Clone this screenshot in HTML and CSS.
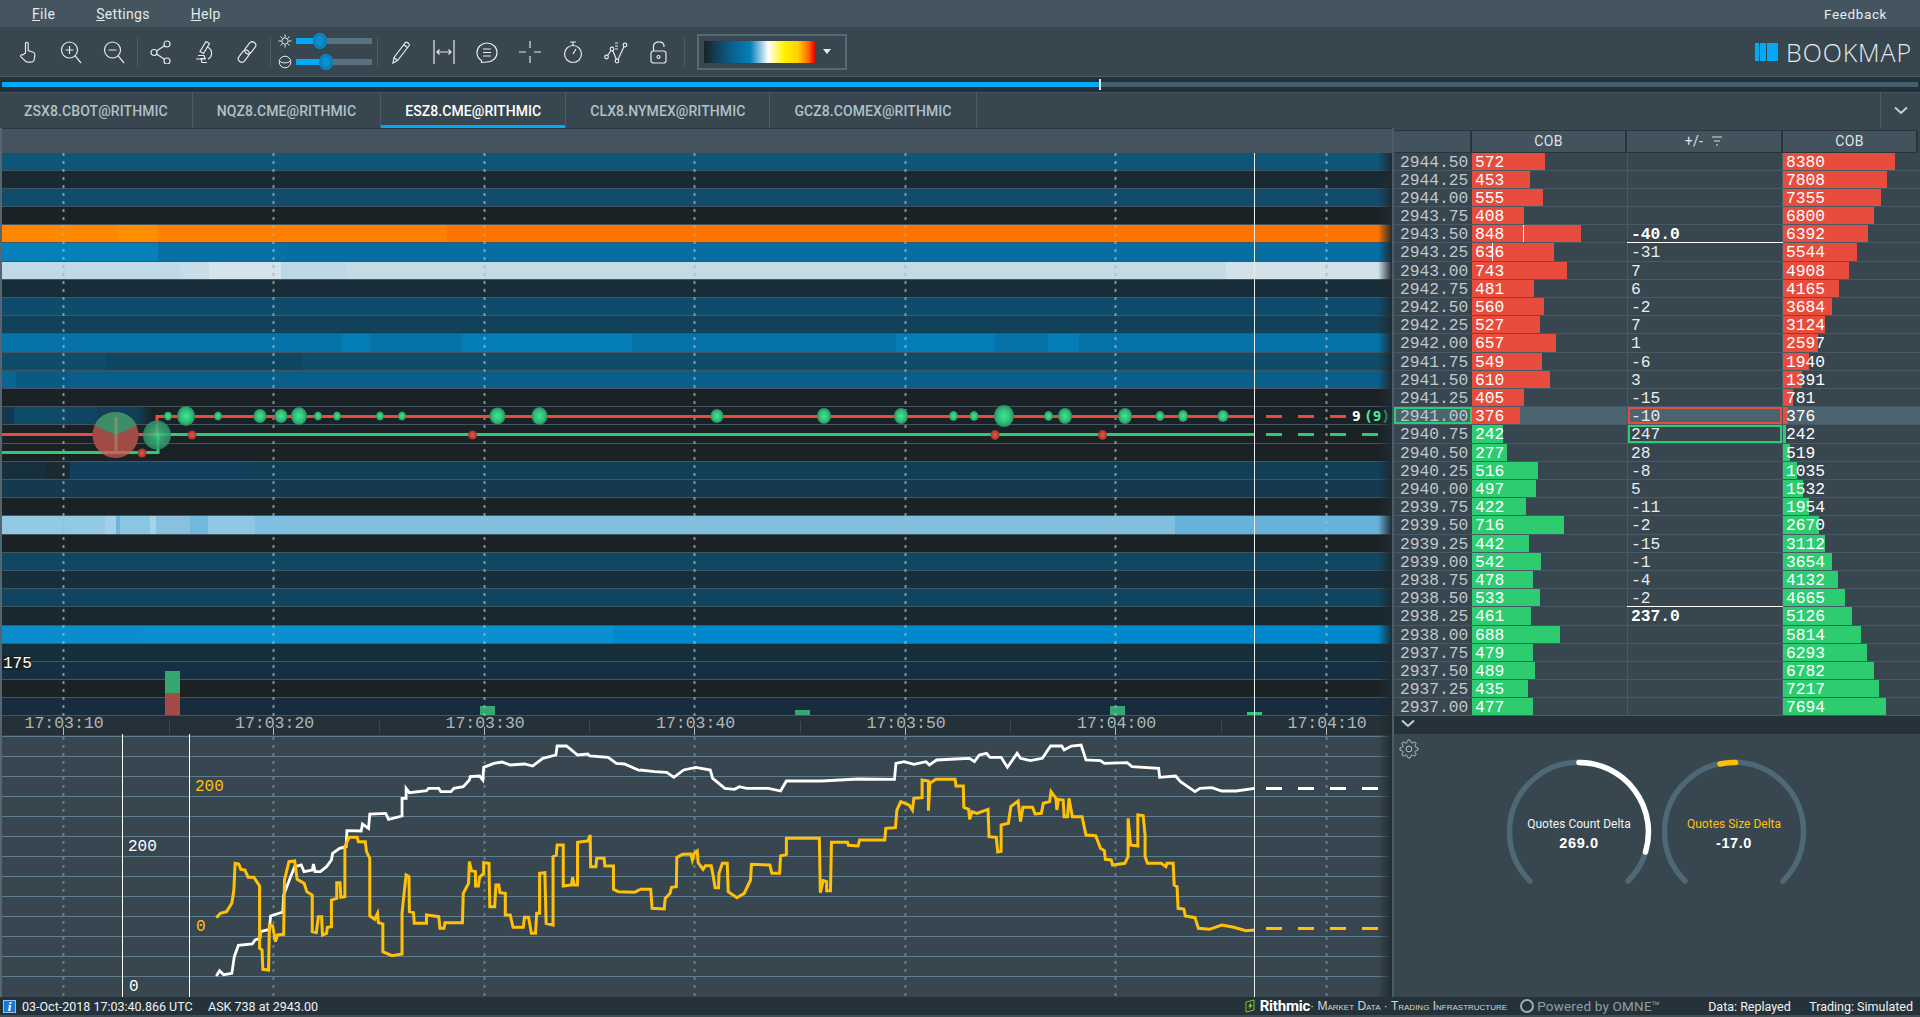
FILE: index.html
```html
<!DOCTYPE html>
<html lang="en">
<head>
<meta charset="utf-8">
<title>Bookmap</title>
<link rel="stylesheet" href="styles.css">
</head>
<body>
<div class="app">
  <header class="menu">
    <nav class="menu-items">
      <span class="menu-item"><u>F</u>ile</span>
      <span class="menu-item"><u>S</u>ettings</span>
      <span class="menu-item"><u>H</u>elp</span>
    </nav>
    <span class="feedback">Feedback</span>
  </header>

  <section class="toolbar">
    <span class="tool"><svg class="icon" viewBox="0 0 24 24"><path d="M9.5 13V3.6c0-1.7 2.7-1.7 2.7 0V10.5l5 1.7c1.2.4 1.8 1.2 1.7 2.4l-.5 4.2c-.3 2.2-1.8 3.4-3.8 3.4h-2.4c-1.6 0-2.7-.6-3.6-1.9L4.7 16.6c-.8-1.3.9-2.7 2.1-1.6z"/></svg></span>
    <span class="tool"><svg class="icon" viewBox="0 0 24 24"><circle cx="10.5" cy="10" r="8"/><path d="M16.2 15.8 22 23M10.5 6v8M6.5 10h8"/></svg></span>
    <span class="tool"><svg class="icon" viewBox="0 0 24 24"><circle cx="10.5" cy="10" r="8"/><path d="M16.2 15.8 22 23M6.5 10h8"/></svg></span>
    <i class="sep"></i>
    <span class="tool"><svg class="icon" viewBox="0 0 24 24"><circle cx="18" cy="4" r="3"/><circle cx="5" cy="12.5" r="3"/><circle cx="18" cy="21" r="3"/><path d="M15.5 5.7 7.5 11M7.5 14l8 5.3"/></svg></span>
    <span class="tool"><svg class="icon" viewBox="0 0 24 24"><path d="M14 1.5l3.5 2-6 10-3.500-2zM15.500 7c3 1.500 4.500 4 4 7.500-.4 2.500-2 4-3.500 4.500M6 15.500h6l1 3H9l1 4h5M4 19h10"/></svg></span>
    <span class="tool"><svg class="icon" viewBox="0 0 24 24"><g transform="rotate(38 12 12)"><rect x="8.500" y="0" width="7" height="13.500" rx="3.500"/><rect x="8.500" y="10.500" width="7" height="13.500" rx="3.500"/></g></svg></span>
    <i class="sep"></i>
    <div class="sliders">
      <div class="slider-row">
        <svg class="mini" viewBox="0 0 14 14"><circle cx="7" cy="7" r="3.200"/><path d="M7 .5v2.500M7 11v2.500M.5 7H3M11 7h2.500M2.500 2.500l1.800 1.800M9.700 9.700l1.800 1.800M2.500 11.500l1.800-1.800M9.700 4.300l1.800-1.800"/></svg>
        <span class="track"><span class="fill fill-a"></span><i class="knob"></i></span>
      </div>
      <div class="slider-row">
        <svg class="mini" viewBox="0 0 14 14"><circle cx="7" cy="7" r="5.800"/><path d="M1.500 6c3 2.500 8 2.500 11 0"/></svg>
        <span class="track"><span class="fill fill-b"></span><i class="knob"></i></span>
      </div>
    </div>
    <i class="sep"></i>
    <span class="tool"><svg class="icon" viewBox="0 0 24 24"><path d="M5 17.500 16.500 2.500c1-1 4.500 1.500 3.700 3L8.500 20.500l-4.500 2.500zM5 17.500l3.500 3M14.800 4.800l3.700 2.800"/></svg></span>
    <span class="tool"><svg class="icon" viewBox="0 0 24 24"><path d="M2 0v24M22 0v24M5 12h14M7.500 9.500 5 12l2.500 2.500M16.500 9.500 19 12l-2.500 2.500"/></svg></span>
    <span class="tool"><svg class="icon" viewBox="0 0 24 24"><path d="M6.500 20.500C3 18.500 2 15.500 2 12.500 2 7 6.500 3 12 3s10 4 10 9.500S17.500 22 12 22c-2 0-2.500 0-5.500.5zM8 9h8M8 12.500h8M8 16h8"/></svg></span>
    <span class="tool"><svg class="icon" viewBox="0 0 24 24"><path d="M12 1v7M12 16v7M1 12h7M16 12h7"/></svg></span>
    <span class="tool"><svg class="icon" viewBox="0 0 24 24"><circle cx="12" cy="14" r="8.500"/><path d="M9 2h6M12 2v3.500M12 14l3-5"/></svg></span>
    <span class="tool"><svg class="icon" viewBox="0 0 24 24"><circle cx="2.500" cy="17" r="1.800"/><circle cx="8" cy="9" r="1.800"/><circle cx="13" cy="21" r="1.800"/><circle cx="21" cy="5" r="1.800"/><path d="M3.500 15.500 7 10.500M8.800 10.700 12.300 19.300M14 19.500 20 6.500M11 3h3M11 6h3M11 9h3"/></svg></span>
    <span class="tool"><svg class="icon" viewBox="0 0 24 24"><path d="M6.500 11V6c0-5.500 10.500-5.500 10.500 0v1"/><rect x="4" y="11" width="15" height="12" rx="2.500"/><circle cx="11.500" cy="17" r="1.500"/></svg></span>
    <i class="sep sep-wide"></i>
    <div class="palette"><span class="palette-bar"></span><i class="caret"></i></div>
    <div class="logo"><i class="logo-b1"></i><i class="logo-b2"></i><i class="logo-b3"></i><span class="logo-text">BOOKMAP</span></div>
  </section>

  <section class="timeline"><div class="timeline-done"></div><i class="timeline-mark"></i><div class="timeline-rest"></div></section>

  <section class="tabs">
    <span class="tab">ZSX8.CBOT@RITHMIC</span>
    <span class="tab">NQZ8.CME@RITHMIC</span>
    <span class="tab active">ESZ8.CME@RITHMIC</span>
    <span class="tab">CLX8.NYMEX@RITHMIC</span>
    <span class="tab">GCZ8.COMEX@RITHMIC</span>
    <span class="tabs-space"></span>
    <span class="tabs-more"><svg class="chev" viewBox="0 0 14 9"><path d="M1 1.500 7 7l6-5.500"/></svg></span>
  </section>

  <main class="main">
    <section class="left">
      <div class="left-head"></div>
      <div class="heat">
        <div class="hr r0"></div><div class="hr r1"></div><div class="hr r2"></div><div class="hr r3"></div><div class="hr r4"></div><div class="hr r5"></div><div class="hr r6"></div><div class="hr r7"></div><div class="hr r8"></div><div class="hr r9"></div>
        <div class="hr r10"></div><div class="hr r11"></div><div class="hr r12"></div><div class="hr r13"></div><div class="hr r14"></div><div class="hr r15"></div><div class="hr r16"></div><div class="hr r17"></div><div class="hr r18"></div><div class="hr r19"></div>
        <div class="hr r20"></div><div class="hr r21"></div><div class="hr r22"></div><div class="hr r23"></div><div class="hr r24"></div><div class="hr r25"></div><div class="hr r26"></div><div class="hr r27"></div><div class="hr r28"></div><div class="hr r29"></div><div class="hr r30"></div>
      </div>
      <div class="axis">
        <span>17:03:10</span><span>17:03:20</span><span>17:03:30</span><span>17:03:40</span><span>17:03:50</span><span>17:04:00</span><span>17:04:10</span>
      </div>
      <div class="study"></div>

      <svg class="overlay" viewBox="0 128 1392 869" width="1392" height="869">
        <defs>
          <radialGradient id="gb"><stop offset="0" stop-color="#3fe794"/><stop offset=".65" stop-color="#2fbd78"/><stop offset="1" stop-color="#2a8a60"/></radialGradient>
          <radialGradient id="gt"><stop offset="0" stop-color="#3fd28c" stop-opacity=".8"/><stop offset="1" stop-color="#2f8f68" stop-opacity=".85"/></radialGradient>
          <radialGradient id="rb"><stop offset="0" stop-color="#f05544"/><stop offset="1" stop-color="#9c352c"/></radialGradient>
          <linearGradient id="fade"><stop offset="0" stop-color="#1f2a31" stop-opacity="0"/><stop offset="1" stop-color="#1f2a31"/></linearGradient>
        </defs>

        <g class="vol-g"><rect x="165" y="671" width="15" height="22"/><rect x="480" y="706" width="15" height="9"/><rect x="795" y="710" width="15" height="5"/><rect x="1110" y="706" width="15" height="9"/><rect class="vol-b" x="1247" y="712" width="15" height="3"/></g>
        <rect class="vol-r" x="165" y="693" width="15" height="22"/>

        <g class="grid-heat"><path d="M63.500 153V716M273.500 153V716M484.500 153V716M694.500 153V716M905.500 153V716M1115.500 153V716M1326.500 153V716"/></g>
        <g class="grid-study"><path d="M63.500 737V997M273.500 737V997M484.500 737V997M694.500 737V997M905.500 737V997M1115.500 737V997M1326.500 737V997"/></g>
        <path class="tick-minor" d="M169.500 721V733M379.500 721V733M589.500 721V733M800.500 721V733M1010.500 721V733M1221.500 721V733"/>
        <path class="tick-major" d="M63.500 727V735M273.500 727V735M484.500 727V735M694.500 727V735M905.500 727V735M1115.500 727V735M1326.500 727V735"/>

        <path class="t-red" d="M2 434.500H157V416.500H1255"/>
        <path class="t-green" d="M2 452.500H158V434.500H1255"/>
        <path class="t-red dash" d="M1266 416.500H1347"/>
        <path class="t-green dash" d="M1266 434.500H1378"/>

        <circle cx="115.500" cy="435" r="23" fill="#a04b46"/>
        <path d="M115.500 435 94.500 425.500A23 23 0 0 1 136.500 425.500Z" fill="#3f8c68"/>
        <path class="bubble-cross" d="M116 417V452M100 452.500H131"/>
        <ellipse cx="157" cy="435" rx="14" ry="14.500" fill="url(#gt)"/>
        <g fill="url(#gb)">
          <ellipse cx="168" cy="416" rx="4" ry="4.500"/><ellipse cx="186" cy="416" rx="9" ry="10"/><ellipse cx="218" cy="416" rx="4" ry="4.500"/><ellipse cx="260" cy="416" rx="6.500" ry="7"/><ellipse cx="281" cy="416" rx="6.500" ry="7"/><ellipse cx="299" cy="416" rx="8" ry="9"/><ellipse cx="318" cy="416" rx="4" ry="4.500"/><ellipse cx="337" cy="416" rx="4" ry="4.500"/><ellipse cx="380" cy="416" rx="4" ry="4.500"/><ellipse cx="402" cy="416" rx="4" ry="4.500"/><ellipse cx="497.500" cy="416" rx="8" ry="8.500"/>
          <ellipse cx="539.500" cy="416" rx="8" ry="9"/><ellipse cx="717" cy="416" rx="6.500" ry="7"/><ellipse cx="824" cy="416" rx="7" ry="8"/><ellipse cx="901" cy="416" rx="7" ry="8"/><ellipse cx="953.500" cy="416" rx="4.500" ry="5"/><ellipse cx="974" cy="416" rx="4.500" ry="5"/><ellipse cx="1004" cy="416" rx="10" ry="11"/><ellipse cx="1048.500" cy="416" rx="4.500" ry="5"/><ellipse cx="1065" cy="416" rx="7" ry="8"/><ellipse cx="1125" cy="416" rx="7" ry="8"/><ellipse cx="1160" cy="416" rx="4.500" ry="5"/><ellipse cx="1183" cy="416" rx="5" ry="6"/><ellipse cx="1223" cy="416" rx="5.500" ry="6"/>
        </g>
        <g fill="url(#rb)">
          <ellipse cx="142" cy="453" rx="4.500" ry="4.500"/><ellipse cx="192" cy="435" rx="4.500" ry="4.500"/><ellipse cx="472.500" cy="435" rx="4.500" ry="4.500"/><ellipse cx="995" cy="435" rx="4.500" ry="5"/><ellipse cx="1102.500" cy="435" rx="4.500" ry="5"/>
        </g>

        <text class="qty" x="1352" y="421">9</text>
        <text class="qty qty-g" x="1364" y="421">(9)</text>

        <rect class="lbl-bg" x="2" y="656" width="29" height="14"/>
        <text class="mono lbl-w" x="3" y="668">175</text>

        <path class="study-v" d="M122.500 734V997M189.500 734V997"/>
        <text class="mono lbl-w" x="128" y="851">200</text>
        <text class="mono lbl-w" x="129" y="991">0</text>
        <text class="mono lbl-y" x="195" y="791">200</text>
        <text class="mono lbl-y" x="196" y="931">0</text>

        <g class="curve curve-w">
          <polyline transform="translate(0 640) scale(.40816 .33333)" points="530,1008 538,992 548,1004 568,1000 574,950 584,916 618,912 625,900 637,895 638,875 660,868 663,828 693,816 695,765 712,710 722,680 738,675 745,695 765,690 768,672 772,695 785,695 800,680 812,660 815,640 832,625 848,620 850,572 885,573 888,552 903,565 906,522 945,520 952,538 985,528 985,475 995,475 995,445 1003,458 1045,452 1050,445 1075,445 1080,455 1105,455 1112,445 1135,440 1150,420 1152,410 1175,408 1183,420 1185,382 1210,370 1230,366 1250,375 1285,372 1305,378 1330,355 1362,345 1365,318 1388,318 1415,345 1440,342 1445,348 1490,352 1510,370 1530,372 1568,392"/>
          <polyline transform="translate(640 720) scale(.48473 .33333)" points="0,150 30,155 55,157 70,172 90,150 115,142 145,150 150,175 175,205 195,208 205,200 220,205 265,205 290,213 302,183 375,183 450,177 525,178 528,130 545,125 565,133 590,125 597,135 612,120 650,117 680,115 690,125 700,105 715,100 722,112 745,112 758,142 778,100 785,115 805,122 830,115 847,78 870,78 875,90 890,78 910,75 920,120 950,122 958,130 1005,128 1015,140 1070,145 1072,172 1105,168 1115,185 1145,215 1155,205 1180,203 1200,213 1230,213 1268,205"/>
        </g>
        <g class="curve curve-y">
          <polyline transform="translate(0 640) scale(.40816 .33333)" points="530,833 540,820 555,815 568,790 573,750 576,670 585,672 590,688 600,690 608,712 622,712 636,738 636,925 642,930 644,988 658,990 660,855 668,858 675,905 680,885 695,883 697,720 708,665 722,663 728,718 745,730 752,755 765,765 765,875 775,878 780,830 788,830 790,885 800,880 802,862 812,860 812,780 825,775 825,728 833,728 835,772 845,770 845,620 855,592 875,592 878,605 895,605 898,635 906,655 906,828 918,838 925,820 927,848 938,852 938,935 960,947 985,942 985,820 990,760 995,705 1002,710 1003,815 1013,818 1015,850 1045,850 1045,825 1075,830 1078,865 1088,865 1090,848 1133,848 1135,760 1148,730 1150,665 1155,692 1165,695 1165,738 1172,738 1175,712 1185,700 1185,668 1198,670 1200,800 1212,800 1215,735 1222,735 1225,758 1238,760 1238,825 1250,825 1257,862 1282,862 1285,832 1295,832 1302,880 1312,880 1315,820 1322,820 1322,700 1335,698 1338,850 1355,855 1355,650 1363,645 1365,615 1380,615 1380,738 1400,735 1403,712 1407,735 1415,735 1415,607 1440,603 1446,585 1447,680 1460,680 1462,655 1480,655 1482,678 1503,678 1503,748 1515,755 1555,757 1568,748"/>
          <polyline transform="translate(640 720) scale(.48473 .33333)" points="0,508 22,508 25,565 50,567 52,535 62,520 65,502 75,500 76,412 88,403 105,402 108,420 112,400 118,393 120,428 130,448 135,437 147,437 150,460 155,503 162,503 163,460 170,430 180,430 182,515 200,533 215,520 228,480 230,433 268,435 272,460 288,460 290,408 302,403 302,355 370,355 372,518 378,482 385,485 385,512 393,512 395,367 428,367 430,376 450,378 453,360 505,360 507,325 527,323 530,270 538,245 555,255 562,270 565,235 582,233 582,180 595,183 595,272 598,190 610,178 650,178 652,198 667,198 668,262 678,268 680,298 685,275 695,280 718,268 720,350 735,352 738,396 745,394 745,315 760,310 765,260 780,243 785,305 790,262 810,262 815,282 828,280 832,250 845,245 848,215 858,235 860,270 863,238 873,240 875,290 882,290 885,235 892,290 912,290 920,345 940,347 950,385 958,392 960,418 972,420 975,435 1000,430 1007,410 1007,295 1012,375 1027,378 1027,285 1038,287 1042,345 1042,410 1047,430 1075,430 1085,440 1087,430 1100,430 1102,495 1108,500 1110,565 1122,567 1125,588 1145,593 1152,625 1175,628 1200,615 1225,622 1250,632 1268,630"/>
        </g>
        <path class="dash-w" d="M1266 788.500H1378"/>
        <path class="dash-y" d="M1266 928.500H1378"/>
        <path class="cross" d="M1254.500 153V997"/>
        <rect x="1378" y="153" width="14" height="844" fill="url(#fade)"/>
      </svg>
    </section>

    <section class="right">
      <div class="lhead"><span></span><span>COB</span><span class="lhead-mid">+/- <svg class="filter" viewBox="0 0 12 10"><path d="M1 1h10M3 5h6M5 9h2"/></svg></span><span>COB</span></div>
      <div class="ladder">
        <div class="lr"><span class="p">2944.50</span><span class="b ask" style="--w:73px">572</span><span class="d"></span><span class="b ask" style="--w:112px">8380</span></div>
        <div class="lr"><span class="p">2944.25</span><span class="b ask" style="--w:58px">453</span><span class="d"></span><span class="b ask" style="--w:104px">7808</span></div>
        <div class="lr"><span class="p">2944.00</span><span class="b ask" style="--w:71px">555</span><span class="d"></span><span class="b ask" style="--w:98px">7355</span></div>
        <div class="lr"><span class="p">2943.75</span><span class="b ask" style="--w:52px">408</span><span class="d"></span><span class="b ask" style="--w:91px">6800</span></div>
        <div class="lr"><span class="p">2943.50</span><span class="b ask" style="--w:109px">848<i class="mark mark-a"></i></span><span class="d total total-b">-40.0</span><span class="b ask" style="--w:85px">6392</span></div>
        <div class="lr"><span class="p">2943.25</span><span class="b ask" style="--w:82px">636<i class="mark mark-b"></i></span><span class="d">-31</span><span class="b ask" style="--w:74px">5544</span></div>
        <div class="lr"><span class="p">2943.00</span><span class="b ask" style="--w:95px">743</span><span class="d">7</span><span class="b ask" style="--w:66px">4908</span></div>
        <div class="lr"><span class="p">2942.75</span><span class="b ask" style="--w:62px">481</span><span class="d">6</span><span class="b ask" style="--w:56px">4165</span></div>
        <div class="lr"><span class="p">2942.50</span><span class="b ask" style="--w:72px">560</span><span class="d">-2</span><span class="b ask" style="--w:49px">3684</span></div>
        <div class="lr"><span class="p">2942.25</span><span class="b ask" style="--w:68px">527</span><span class="d">7</span><span class="b ask" style="--w:42px">3124</span></div>
        <div class="lr"><span class="p">2942.00</span><span class="b ask" style="--w:84px">657</span><span class="d">1</span><span class="b ask" style="--w:35px">2597</span></div>
        <div class="lr"><span class="p">2941.75</span><span class="b ask" style="--w:70px">549</span><span class="d">-6</span><span class="b ask" style="--w:26px">1940</span></div>
        <div class="lr"><span class="p">2941.50</span><span class="b ask" style="--w:78px">610</span><span class="d">3</span><span class="b ask" style="--w:19px">1391</span></div>
        <div class="lr"><span class="p">2941.25</span><span class="b ask" style="--w:52px">405</span><span class="d">-15</span><span class="b ask" style="--w:10px">781</span></div>
        <div class="lr hl"><span class="p box-g">2941.00</span><span class="b ask" style="--w:48px">376</span><span class="d box-r">-10</span><span class="b ask" style="--w:5px">376</span></div>
        <div class="lr"><span class="p">2940.75</span><span class="b bid" style="--w:31px">242</span><span class="d box-g">247</span><span class="b bid" style="--w:3px">242</span></div>
        <div class="lr"><span class="p">2940.50</span><span class="b bid" style="--w:35px">277</span><span class="d">28</span><span class="b bid" style="--w:7px">519</span></div>
        <div class="lr"><span class="p">2940.25</span><span class="b bid" style="--w:66px">516</span><span class="d">-8</span><span class="b bid" style="--w:14px">1035</span></div>
        <div class="lr"><span class="p">2940.00</span><span class="b bid" style="--w:64px">497</span><span class="d">5</span><span class="b bid" style="--w:20px">1532</span></div>
        <div class="lr"><span class="p">2939.75</span><span class="b bid" style="--w:54px">422</span><span class="d">-11</span><span class="b bid" style="--w:26px">1954</span></div>
        <div class="lr"><span class="p">2939.50</span><span class="b bid" style="--w:92px">716</span><span class="d">-2</span><span class="b bid" style="--w:36px">2670</span></div>
        <div class="lr"><span class="p">2939.25</span><span class="b bid" style="--w:57px">442</span><span class="d">-15</span><span class="b bid" style="--w:42px">3112</span></div>
        <div class="lr"><span class="p">2939.00</span><span class="b bid" style="--w:69px">542</span><span class="d">-1</span><span class="b bid" style="--w:49px">3654</span></div>
        <div class="lr"><span class="p">2938.75</span><span class="b bid" style="--w:61px">478</span><span class="d">-4</span><span class="b bid" style="--w:55px">4132</span></div>
        <div class="lr"><span class="p">2938.50</span><span class="b bid" style="--w:68px">533</span><span class="d">-2</span><span class="b bid" style="--w:62px">4665</span></div>
        <div class="lr"><span class="p">2938.25</span><span class="b bid" style="--w:59px">461</span><span class="d total total-t">237.0</span><span class="b bid" style="--w:69px">5126</span></div>
        <div class="lr"><span class="p">2938.00</span><span class="b bid" style="--w:88px">688</span><span class="d"></span><span class="b bid" style="--w:78px">5814</span></div>
        <div class="lr"><span class="p">2937.75</span><span class="b bid" style="--w:61px">479</span><span class="d"></span><span class="b bid" style="--w:84px">6293</span></div>
        <div class="lr"><span class="p">2937.50</span><span class="b bid" style="--w:63px">489</span><span class="d"></span><span class="b bid" style="--w:91px">6782</span></div>
        <div class="lr"><span class="p">2937.25</span><span class="b bid" style="--w:56px">435</span><span class="d"></span><span class="b bid" style="--w:96px">7217</span></div>
        <div class="lr"><span class="p">2937.00</span><span class="b bid" style="--w:61px">477</span><span class="d"></span><span class="b bid" style="--w:103px">7694</span></div>
      </div>
      <div class="collapse"><svg class="chev" viewBox="0 0 14 9"><path d="M1 1.500 7 7l6-5.500"/></svg></div>
      <div class="gauges">
        <svg class="gear" viewBox="0 0 24 24"><circle cx="12" cy="12" r="3.500"/><path d="M19.400 15a1.650 1.650 0 0 0 .33 1.820l.06.06a2 2 0 0 1 0 2.830 2 2 0 0 1-2.830 0l-.06-.06a1.650 1.650 0 0 0-1.820-.33 1.650 1.650 0 0 0-1 1.510V21a2 2 0 0 1-2 2 2 2 0 0 1-2-2v-.09A1.650 1.650 0 0 0 9 19.400a1.650 1.650 0 0 0-1.820.33l-.06.06a2 2 0 0 1-2.830 0 2 2 0 0 1 0-2.830l.06-.06a1.650 1.650 0 0 0 .33-1.820 1.650 1.650 0 0 0-1.510-1H3a2 2 0 0 1-2-2 2 2 0 0 1 2-2h.09A1.650 1.650 0 0 0 4.600 9a1.650 1.650 0 0 0-.33-1.820l-.06-.06a2 2 0 0 1 0-2.830 2 2 0 0 1 2.830 0l.06.06a1.650 1.650 0 0 0 1.820.33H9a1.650 1.650 0 0 0 1-1.510V3a2 2 0 0 1 2-2 2 2 0 0 1 2 2v.09a1.650 1.650 0 0 0 1 1.510 1.650 1.650 0 0 0 1.820-.33l.06-.06a2 2 0 0 1 2.830 0 2 2 0 0 1 0 2.830l-.06.06a1.650 1.650 0 0 0-.33 1.820V9a1.650 1.650 0 0 0 1.510 1H21a2 2 0 0 1 2 2 2 2 0 0 1-2 2h-.09a1.650 1.650 0 0 0-1.510 1z"/></svg>
        <div class="gauge">
          <svg class="arc" viewBox="-77 -77 154 132"><path class="arc-track" d="M-49 49A69.500 69.500 0 1 1 49 49"/><path class="arc-w" d="M0-69.500A69.500 69.500 0 0 1 66.500 20"/></svg>
          <div class="gauge-text"><span class="g-name">Quotes Count Delta</span><span class="g-val">269.0</span></div>
        </div>
        <div class="gauge">
          <svg class="arc" viewBox="-77 -77 154 132"><path class="arc-track" d="M-49 49A69.500 69.500 0 1 1 49 49"/><path class="arc-y" d="M-14-68A69.500 69.500 0 0 1 1.500-69.500"/></svg>
          <div class="gauge-text"><span class="g-name g-yellow">Quotes Size Delta</span><span class="g-val">-17.0</span></div>
        </div>
      </div>
    </section>
  </main>

  <footer class="status">
    <span class="info-ic">i</span>
    <span class="s-date">03-Oct-2018 17:03:40.866 UTC</span>
    <span class="s-ask">ASK 738 at 2943.00</span>
    <span class="status-space"></span>
    <svg class="r-logo" viewBox="0 0 12 14"><path d="M1 3l8-2v10l-8 2z"/><path class="r-in" d="M6 3.500 3 7.500h2l-1 3 4-4.500H6z"/></svg>
    <span class="rithmic">Rithmic</span>
    <span class="rithmic-sub">· Market Data · Trading Infrastructure</span>
    <i class="omne-ring"></i>
    <span class="omne">Powered by OMNE™</span>
    <span class="s-data">Data: Replayed</span>
    <span class="s-trading">Trading: Simulated</span>
  </footer>
</div>
</body>
</html>
```
FILE: styles.css
```css
* { box-sizing: border-box; }
html, body { margin: 0; padding: 0; background: #37464f; }
body { width: 1920px; height: 1017px; overflow: hidden; font-family: Roboto, "Liberation Sans", sans-serif; color: #e6ecef; }
.app { display: flex; flex-direction: column; height: 1017px; }

.menu { height: 27px; background: #44555f; display: flex; align-items: center; justify-content: space-between; padding: 0 33px 0 32px; flex: none; }
.menu-items { display: flex; gap: 41px; }
.menu-item { font-size: 14px; letter-spacing: .3px; color: #e3e9ec; }
.feedback { font-size: 13.500px; letter-spacing: .6px; color: #e6ecef; }

.toolbar { height: 50px; flex: none; background: #37464f; border-bottom: 1px solid #4a5b66; display: flex; align-items: center; padding-left: 6.5px; position: relative; }
.tool { width: 43px; display: flex; justify-content: center; flex: none; }
.icon { width: 24px; height: 24px; fill: none; stroke: #e3e9ec; stroke-width: 1.2; }
.sep { width: 1px; height: 30px; background: #4b5c66; margin: 0 1.500px; flex: none; }
.sep-wide { margin: 0 12px 0 3.500px; }
.sliders { width: 103px; display: flex; flex-direction: column; gap: 8px; padding-left: 5px; flex: none; }
.slider-row { display: flex; align-items: center; gap: 4.500px; height: 13px; }
.mini { width: 14px; height: 14px; fill: none; stroke: #e3e9ec; stroke-width: 1; flex: none; }
.track { width: 76px; height: 6px; background: #5a7280; position: relative; display: flex; align-items: center; flex: none; }
.fill { height: 6px; background: #03a9f4; display: block; }
.fill-a { width: 24px; }
.fill-b { width: 30px; }
.knob { width: 14px; height: 16px; border-radius: 50%; background: #0a8fd0; margin-left: -7px; box-shadow: inset 0 0 0 3px #0e7fb8; flex: none; }
.palette { width: 150px; height: 36px; border: 2px solid #566a75; display: flex; align-items: center; padding-left: 5px; flex: none; }
.palette-bar { width: 111px; height: 22px; background: linear-gradient(90deg, #1a2226 0, #0a5a85 22%, #0680bb 42%, #ffffff 58%, #fff200 72%, #ffd000 85%, #ff6a00 94%, #e00000 100%); }
.caret { width: 0; height: 0; margin-left: 8px; border-left: 4.5px solid transparent; border-right: 4.5px solid transparent; border-top: 5px solid #e6ecef; }
.logo { margin-left: auto; display: flex; align-items: center; height: 18px; padding-right: 8px; }
.logo i { display: block; height: 18px; background: #03a9f4; }
.logo-b1 { width: 4px; margin-right: 1px; }
.logo-b2 { width: 5.500px; margin-right: 1.500px; }
.logo-b3 { width: 11px; margin-right: 8px; }
.logo-text { font-family: "Open Sans", sans-serif; font-weight: 300; font-size: 25px; letter-spacing: .9px; color: #e3e9ec; line-height: 18px; }

.timeline { height: 15px; flex: none; background: #253138; display: flex; align-items: center; padding: 0 2px; }
.timeline-done { width: 1097px; height: 5px; background: #03a9f4; }
.timeline-mark { width: 2px; height: 11px; background: #dfe6e9; }
.timeline-rest { flex: 1; height: 5px; background: #44606f; }

.tabs { height: 36px; flex: none; background: #37464f; display: flex; border-top: 1px solid #465660; border-bottom: 0; }
.tab { padding: 0 24px; display: flex; align-items: center; font-size: 14px; letter-spacing: .08px; font-weight: 500; color: #b2c0c8; border-right: 1px solid #4a5b66; flex: none; }
.tab.active { color: #fff; box-shadow: inset 0 -3px 0 #03a9f4; }
.tabs-space { flex: 1; }
.tabs-more { width: 40px; display: flex; align-items: center; justify-content: center; border-left: 1px solid #4a5b66; }
.chev { width: 14px; height: 9px; fill: none; stroke: #c6d0d5; stroke-width: 2; }

.main { flex: 1; display: flex; min-height: 0; }
.left { width: 1392px; position: relative; display: flex; flex-direction: column; border-left: 2px solid #56666f; flex: none; }
.left-head { height: 25px; background: #44535d; border-top: 1px solid #2b373e; flex: none; }
.heat, .ladder { display: grid; grid-template-rows: repeat(5, 18px) 19px repeat(4, 18px) 19px repeat(4, 18px) 19px repeat(4, 18px) 19px repeat(4, 18px) 19px repeat(4, 18px) 18px; flex: none; }
.hr { border-bottom: 1px solid #425560; }
.r0 { background: #0e5577; }
.r1 { background: #192a33; }
.r2 { background: #114c6c; }
.r3 { background: #1a2226; }
.r4 { background: linear-gradient(90deg, #ff8800 0 116px, #ff8d00 116px 156px, #ff7f00 156px 445px, #ff7400 445px); }
.r5 { background: linear-gradient(90deg, #0680bb 0 156px, #0771a5 156px 285px, #066ea2 285px); }
.r6 { background: linear-gradient(90deg, #bfd9e7 0 178px, #c8dde8 178px 207px, #d5e3ea 207px 279px, #bcd8e6 279px 345px, #c4dbe6 345px 1224px, #d3e2e9 1224px); }
.r7 { background: #172d3a; }
.r8 { background: #0f4c6c; }
.r9 { background: #12425a; }
.r10 { background: linear-gradient(90deg, #0673a8 0 340px, #057db6 340px 368px, #0673a8 368px 460px, #057db6 460px 630px, #0673a8 630px 894px, #057db6 894px 993px, #0673a8 993px 1046px, #057db6 1046px 1077px, #0673a8 1077px); }
.r11 { background: linear-gradient(90deg, #0f4c69 0 104px, #0e4560 104px 300px, #0f4c69 300px); }
.r12 { background: linear-gradient(90deg, #0a6593 0 14px, #0a5a85 14px 66px, #0a5e8a 66px); }
.r13 { background: #1a2226; }
.r14 { background: linear-gradient(90deg, #14384d 0 12px, #0f4a69 12px 65px, #114463 65px 95px, #123f57 95px 135px, #1a2226 150px); }
.r15 { background: #1a2226; }
.r16 { background: #1a2226; }
.r17 { background: linear-gradient(90deg, #16303d 0 43px, #1a2a33 43px 68px, #10405d 68px 250px, #123f58 250px); }
.r18 { background: #15394f; }
.r19 { background: #1a2226; }
.r20 { background: linear-gradient(90deg, #93c9e3 0 103px, #a3d0e6 103px 114px, #6cb4da 114px 118px, #8ac6e2 118px 148px, #a5d3e8 148px 154px, #8ac0de 154px 188px, #70b8dd 188px 206px, #8ec8e4 206px 253px, #7fc0e2 253px 283px, #80bfdd 283px 1173px, #67b2da 1173px); }
.r21 { background: #1a2226; }
.r22 { background: #104864; }
.r23 { background: #152f3c; }
.r24 { background: #10455f; }
.r25 { background: #18282f; }
.r26 { background: linear-gradient(90deg, #0a8ccd 0 141px, #0c8fce 141px 611px, #0088cc 611px); border-bottom-color: #0a6f9f; }
.r27 { background: #162f3b; }
.r28 { background: #152f43; }
.r29 { background: #1b2224; }
.r30 { background: #172c3c; }

.axis { height: 19px; flex: none; background: #253138; display: flex; gap: 131.500px; padding-left: 22.500px; font-family: "Liberation Mono", monospace; font-size: 16.500px; line-height: 15px; color: #aeb7bc; }
.axis span { width: 79px; flex: none; }
.study { flex: 1; background: repeating-linear-gradient(180deg, #607d90 0 1px, transparent 1px 20px) 0 1px / 100% 241px no-repeat, #38474f; }

.overlay { position: absolute; top: 0; left: -2px; pointer-events: none; }
.grid-heat path { stroke: #a8b3b9; stroke-width: 2; stroke-dasharray: 3 5; fill: none; opacity: .75; }
.grid-study path { stroke: #6b7e88; stroke-width: 2; stroke-dasharray: 3 5; fill: none; }
.tick-minor { stroke: #3c4a52; stroke-width: 1; }
.tick-major { stroke: #aeb8bd; stroke-width: 1; }
.vol-g { fill: #36a773; }
.vol-b { fill: #2ecc71; }
.vol-r { fill: #a44b47; }
.t-red { stroke: #e74c3c; stroke-width: 3; fill: none; }
.t-green { stroke: #2ecc71; stroke-width: 3; fill: none; }
.dash { stroke-dasharray: 16 16; }
.bubble-cross { stroke: #b0a870; stroke-opacity: .45; stroke-width: 3; fill: none; }
.qty { font-family: "DejaVu Sans Mono", monospace; font-weight: 700; font-size: 14.500px; fill: #fff; }
.qty-g { fill: #4af0a0; }
.mono { font-family: "Liberation Mono", monospace; font-size: 16px; }
.lbl-bg { fill: #1b2226; }
.lbl-w { fill: #fff; }
.lbl-y { fill: #ffc107; }
.study-v { stroke: #fff; stroke-width: 1; }
.curve polyline { fill: none; vector-effect: non-scaling-stroke; stroke-linejoin: miter; }
.curve-w polyline { stroke: #fff; stroke-width: 2.800; }
.curve-y polyline { stroke: #ffc107; stroke-width: 3; }
.dash-w { stroke: #fff; stroke-width: 3; stroke-dasharray: 16 16; }
.dash-y { stroke: #ffc107; stroke-width: 3; stroke-dasharray: 16 16; }
.cross { stroke: #e8eef0; stroke-width: 1; }

.right { width: 528px; flex: none; border-left: 2px solid #4a5d69; display: flex; flex-direction: column; background: #37464f; }
.lhead { height: 25px; flex: none; padding-top: 2px; display: grid; grid-template-columns: 78px 155px 156px 135px; background: #37464f; }
.lhead span { background: #43535d; border-right: 2px solid #28343b; border-bottom: 1px solid #28343b; border-top: 1px solid #28343b; font-size: 14px; letter-spacing: .3px; color: #dbe3e7; display: flex; align-items: center; justify-content: center; gap: 8px; padding-bottom: 1px; }
.filter { width: 12px; height: 10px; fill: none; stroke: #dbe3e7; stroke-width: 1; }
.lr { display: grid; grid-template-columns: 78px 155px 156px 135px; border-bottom: 1px solid #465a66; font-family: "Liberation Mono", monospace; font-size: 16.300px; line-height: 15px; min-width: 0; min-height: 0; }
.ladder { width: 526px; overflow: hidden; }
.lr span { display: block; padding-top: 2px; min-height: 0; }
.p { color: #bfc8cc; padding-left: 6px; }
.b { color: #fff; padding-left: 3px; position: relative; background-repeat: no-repeat; background-size: var(--w) 100%; }
.ask { background-image: linear-gradient(#e74c3c, #e74c3c); }
.bid { background-image: linear-gradient(#2ecc71, #2ecc71); }
.b + .d { border-left: 1px solid #465a66; }
.d { color: #e6ecef; padding-left: 3px; border-right: 1px solid #465a66; }
.total { font-weight: 700; color: #fff; }
.total-b { box-shadow: 0 1px 0 #fff; position: relative; }
.total-t { box-shadow: 0 -1px 0 #fff; position: relative; }
.hl { background: #4c6370; }
.box-g { box-shadow: inset 0 0 0 2px #2ecc71; }
.box-r { box-shadow: inset 0 0 0 2px #e74c3c; }
.mark { position: absolute; top: 0; bottom: 0; width: 1px; background: #fff; }
.mark-a { left: 51px; }
.mark-b { left: 20px; }
.collapse { height: 18px; flex: none; background: #25323a; padding: 3px 0 0 7px; display: flex; align-items: flex-start; }
.gauges { flex: 1; display: flex; position: relative; padding: 21px 0 0 108px; gap: 1px; }
.gear { position: absolute; left: 5px; top: 5px; width: 20px; height: 20px; fill: none; stroke: #c6d0d5; stroke-width: 1.100; }
.gauge { width: 154px; height: 132px; position: relative; flex: none; }
.arc { width: 154px; height: 132px; display: block; fill: none; stroke-linecap: round; stroke-width: 5.500; }
.arc-track { stroke: #4f6875; }
.arc-w { stroke: #fff; }
.arc-y { stroke: #ffc107; }
.gauge-text { position: absolute; left: 0; right: 0; top: 62px; display: flex; flex-direction: column; align-items: center; gap: 3px; }
.g-name { font-size: 12px; line-height: 15px; color: #f0f4f6; }
.g-yellow { color: #ffc107; }
.g-val { font-family: "Liberation Sans", sans-serif; font-weight: 700; font-size: 14.500px; letter-spacing: .6px; color: #fff; line-height: 16px; }

.status { height: 20px; flex: none; background: #25323a; border-bottom: 2px solid #3f4f58; display: flex; align-items: center; padding: 0 7px 0 3px; font-size: 12.500px; color: #eef2f4; }
.info-ic { width: 13px; height: 13px; background: #1976d2; border: 1px solid #8fc2ea; color: #fff; font-family: "Liberation Serif", serif; font-style: italic; font-weight: 700; font-size: 13px; line-height: 11px; text-align: center; margin-right: 6px; flex: none; }
.s-date { width: 186px; flex: none; }
.status-space { flex: 1; }
.r-logo { width: 12px; height: 14px; margin-right: 3px; fill: #1f3a22; stroke: #7fc242; flex: none; }
.r-in { fill: #7fc242; stroke: none; }
.rithmic { font-weight: 700; font-size: 15px; color: #fff; letter-spacing: -.2px; }
.rithmic-sub { font-family: "Liberation Sans", sans-serif; font-size: 12px; font-variant: small-caps; color: #cfd8dc; margin-right: 13px; }
.omne-ring { width: 14px; height: 14px; border: 2px solid #9eacb3; border-radius: 50%; margin-right: 3px; flex: none; }
.omne { font-size: 13.500px; color: #8f9ea6; letter-spacing: .2px; width: 171px; flex: none; }
.s-data { width: 101px; flex: none; }
```
